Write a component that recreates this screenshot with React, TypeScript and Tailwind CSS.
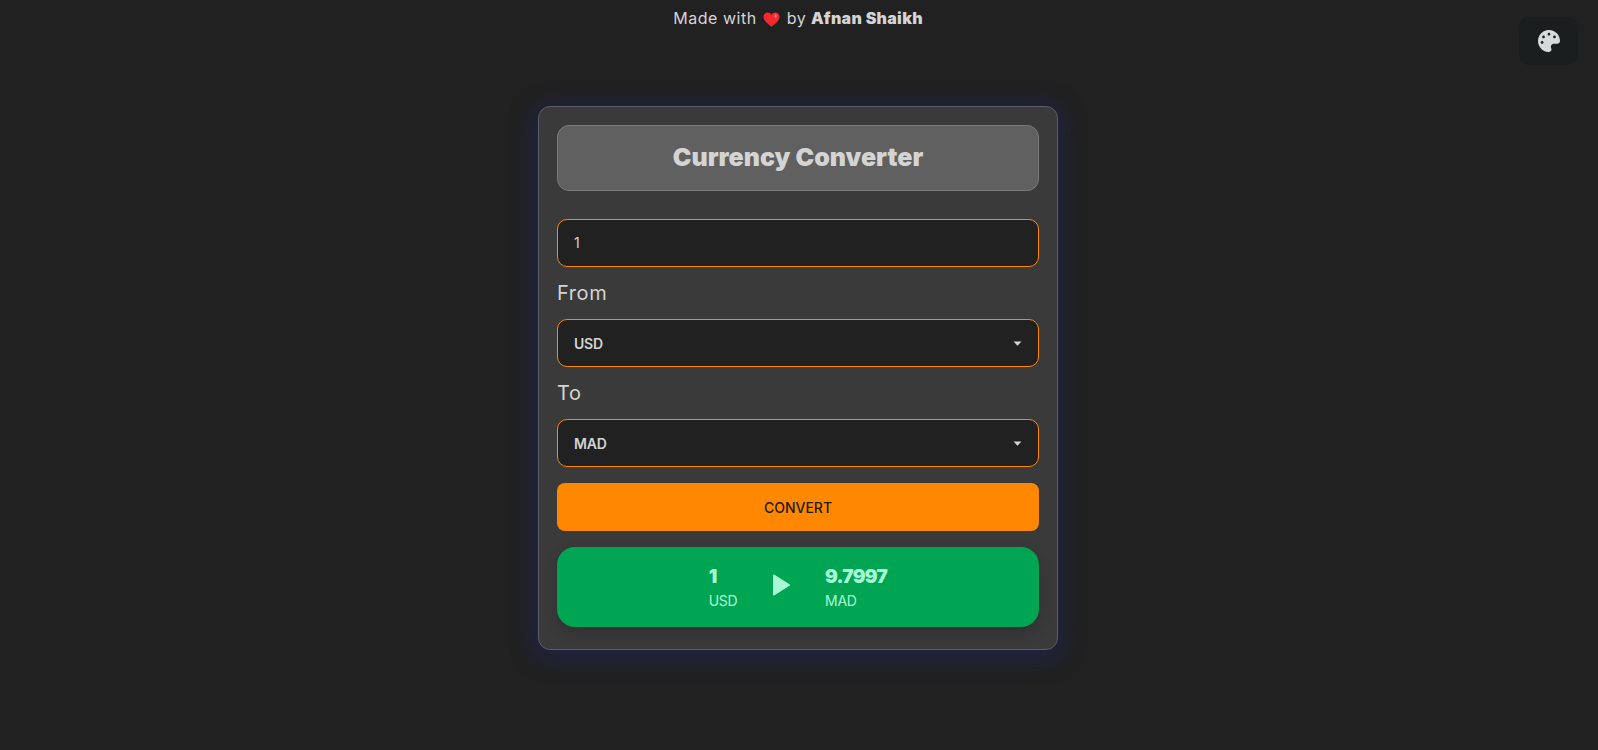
import { FaPalette } from "react-icons/fa";

function Caret() {
  return (
    <svg className="pointer-events-none absolute right-[17px] top-[22px]" width="9" height="5" viewBox="0 0 9 5">
      <path d="M0.5 0.5h8L4.5 4.700z" fill="#d6d6d6" />
    </svg>
  );
}

function Picker({ value }: { value: string }) {
  return (
    <div className="relative h-[48px] w-full">
      <select
        defaultValue={value}
        className="h-full w-full appearance-none rounded-[10px] border border-[#ff8800] bg-[#212121] px-[16px] text-[14px] font-semibold tracking-[-0.2px] text-[#d4d4d4] outline-none"
      >
        <option>{value}</option>
      </select>
      <Caret />
    </div>
  );
}

export default function App() {
  return (
    <div className="relative flex min-h-[750px] flex-col items-center bg-[#212121] pr-[2px] text-[#d4d4d4] [font-family:Inter,'Noto_Sans',sans-serif]">
      <p className="flex h-[36px] items-center text-[16px] text-[#d4d4d4]">
        <span className="tracking-[0.55px]">Made with</span>
        <svg className="ml-[6px] mr-[7px] mt-[2px]" width="17" height="15" viewBox="0 0 17 15">
          <path d="M8.500 14.800C5 11.800.5 9.100.5 4.700.5 2.200 2.400.4 4.600.4c1.700 0 3 .9 3.900 2.300C9.400 1.300 10.700.4 12.400.4c2.200 0 4.100 1.800 4.100 4.300 0 4.400-4.500 7.100-8 10.100z" fill="#f5272f" />
          <ellipse cx="12.600" cy="4" rx="1.100" ry="1.700" fill="#ff7f84" />
        </svg>
        <span className="tracking-[0.4px]">by</span>
        <span className="ml-[5px] font-black tracking-[0.3px]">Afnan Shaikh</span>
      </p>

      <button className="absolute right-[20px] top-[17px] flex h-[48px] w-[59px] items-center justify-center rounded-[10px] bg-[#1b1e1f] text-[#d6dadb]">
        <FaPalette size={22} />
      </button>

      <div className="mt-[70px] flex h-[544px] w-[520px] flex-col rounded-[12px] border border-[#5c5c66] bg-[#3a3a3a] px-[18px] pt-[18px] shadow-[0_4px_20px_6px_rgba(30,35,72,0.85)]">
        <h1 className="flex h-[66px] items-center justify-center rounded-[12px] border border-[#7a7a7a] bg-[#606060] text-[25px] font-black text-[#d4d4d4]">
          Currency Converter
        </h1>

        <input
          defaultValue="1"
          className="mt-[28px] h-[48px] w-full rounded-[10px] border border-[#ff8800] bg-[#212121] px-[16px] pb-[2px] text-[14px] text-[#d4d4d4] outline-none"
        />

        <label className="flex h-[52px] items-center text-[20px] tracking-[0.6px]">From</label>
        <Picker value="USD" />

        <label className="flex h-[52px] items-center text-[20px] tracking-[0.6px]">To</label>
        <Picker value="MAD" />

        <button className="mt-[16px] h-[48px] w-full rounded-[8px] bg-[#ff8800] text-[14px] font-medium text-[#221a0f]">
          CONVERT
        </button>

        <div className="mt-[16px] flex h-[80px] items-center justify-center gap-[34px] rounded-[18px] bg-[#00a553] text-[#a8f9d3] shadow-[0_6px_14px_rgba(0,0,0,0.18)]">
          <div className="flex flex-col">
            <span className="text-[19px] font-black leading-[28px]">1</span>
            <span className="text-[14px] leading-[20px] tracking-[-0.4px]">USD</span>
          </div>
          <svg className="mb-[4px]" width="20" height="24" viewBox="0 0 20 24">
            <path d="M3 2.500L18 12L3 21.500z" fill="#a8f9d3" stroke="#a8f9d3" strokeWidth="2" strokeLinejoin="round" />
          </svg>
          <div className="flex flex-col">
            <span className="text-[19px] font-black leading-[28px] tracking-[-0.7px]">9.7997</span>
            <span className="text-[14px] leading-[20px] tracking-[-0.3px]">MAD</span>
          </div>
        </div>
      </div>
    </div>
  );
}
